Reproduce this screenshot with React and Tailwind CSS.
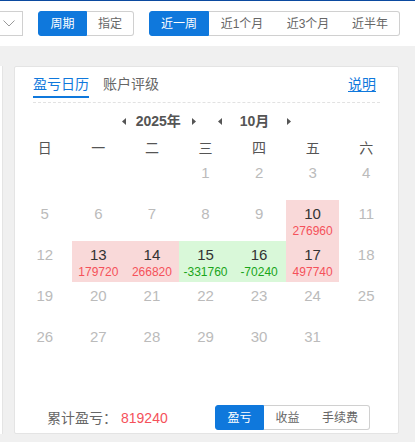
import React from "react";

const FONT = { fontFamily: '"Liberation Sans", Arial, "Noto Sans CJK SC", sans-serif' };

function TriL() {
  return (
    <svg width="4" height="7" viewBox="0 0 4 7" className="block">
      <path d="M4 0 L0 3.5 L4 7 Z" fill="#555" />
    </svg>
  );
}
function TriR() {
  return (
    <svg width="4" height="7" viewBox="0 0 4 7" className="block">
      <path d="M0 0 L4 3.5 L0 7 Z" fill="#555" />
    </svg>
  );
}

const days = [
  [null, null, null, { d: 1 }, { d: 2 }, { d: 3 }, { d: 4 }],
  [{ d: 5 }, { d: 6 }, { d: 7 }, { d: 8 }, { d: 9 }, { d: 10, v: "276960", up: true }, { d: 11 }],
  [
    { d: 12 },
    { d: 13, v: "179720", up: true },
    { d: 14, v: "266820", up: true },
    { d: 15, v: "-331760", up: false },
    { d: 16, v: "-70240", up: false },
    { d: 17, v: "497740", up: true },
    { d: 18 },
  ],
  [{ d: 19 }, { d: 20 }, { d: 21 }, { d: 22 }, { d: 23 }, { d: 24 }, { d: 25 }],
  [{ d: 26 }, { d: 27 }, { d: 28 }, { d: 29 }, { d: 30 }, { d: 31 }, null],
  [null, null, null, null, null, null, null],
];

function Cell({ c }) {
  if (!c) return <div className="h-[41px]" />;
  if (!c.v) {
    return (
      <div className="h-[41px] flex flex-col items-center pt-[5px]">
        <div className="text-[15px] leading-[18px] text-[#bbbbbb]">{c.d}</div>
      </div>
    );
  }
  return (
    <div
      className={
        "h-[41px] flex flex-col items-center pt-[5px] " +
        (c.up ? "bg-[#f9d9d9]" : "bg-[#d9f8d9]")
      }
    >
      <div className="text-[15px] leading-[18px] text-[#333333]">{c.d}</div>
      <div
        className={
          "text-[12px] leading-[16px] " + (c.up ? "text-[#f5515a]" : "text-[#1aa51a]")
        }
      >
        {c.v}
      </div>
    </div>
  );
}

export default function App() {
  return (
    <div className="w-[415px] h-[442px] bg-[#f0f0f0] overflow-hidden flex flex-col" style={FONT}>
      {/* Top bar */}
      <div className="h-[46px] bg-white border-t border-[#0b4aa0] flex items-start pt-[10px] shrink-0">
        <div className="w-[23px] h-[25px] border border-l-0 border-[#d0d0d0] flex items-center pl-[3px]">
          <svg width="12" height="7" viewBox="0 0 12 7">
            <path d="M0.5 0.5 L6 6 L11.5 0.5" fill="none" stroke="#999" strokeWidth="1" />
          </svg>
        </div>
        <div className="flex ml-[15px] text-[12px] leading-none">
          <div className="w-[49px] h-[25px] flex items-center justify-center bg-[#0f78dc] text-white border border-[#0f78dc] rounded-l-[3px]">
            周期
          </div>
          <div className="w-[47px] h-[25px] flex items-center justify-center text-[#666] border-y border-r border-[#d0d0d0] rounded-r-[3px]">
            指定
          </div>
        </div>
        <div className="flex ml-[15px] text-[12px] leading-none">
          <div className="w-[60px] h-[25px] flex items-center justify-center bg-[#0f78dc] text-white border border-[#0f78dc] rounded-l-[3px]">
            近一周
          </div>
          <div className="w-[66px] h-[25px] flex items-center justify-center text-[#666] border-y border-[#d0d0d0]">
            近1个月
          </div>
          <div className="w-[66px] h-[25px] flex items-center justify-center text-[#666] border-y border-[#d0d0d0]">
            近3个月
          </div>
          <div className="w-[59px] h-[25px] flex items-center justify-center text-[#666] border-y border-r border-[#d0d0d0] rounded-r-[3px]">
            近半年
          </div>
        </div>
      </div>

      {/* Content area */}
      <div className="flex items-start pt-[20px]">
        <div className="w-[3px] h-[368px] bg-white border-r border-[#e4e4e4]" />
        <div className="ml-[11px] w-[385px] h-[368px] bg-white border border-[#e4e4e4] rounded-[2px] flex flex-col">
          {/* tabs */}
          <div className="mx-[18px] pt-[7px] pb-[4px] border-b border-dashed border-[#e2e2e2] flex items-end text-[14px] leading-[20px]">
            <div className="pb-[2px] border-b-2 border-[#0f78dc] text-[#0f78dc]">盈亏日历</div>
            <div className="ml-[14px] pb-[4px] text-[#666]">账户评级</div>
            <div className="ml-auto mr-[4px] pb-[4px] text-[#0f78dc] underline underline-offset-2">说明</div>
          </div>

          {/* year/month nav */}
          <div className="mt-[6px] h-[24px] flex items-center justify-center text-[14px] font-bold text-[#555] leading-none">
            <TriL />
            <span className="ml-[10px]">2025年</span>
            <span className="ml-[11px]"><TriR /></span>
            <span className="ml-[22px]"><TriL /></span>
            <span className="ml-[18px]">10月</span>
            <span className="ml-[18px]"><TriR /></span>
          </div>

          {/* weekdays */}
          <div className="mt-[4px] ml-[3px] w-[375px] grid grid-cols-7 h-[22px] items-center text-[14px] text-[#555] leading-none">
            {["日", "一", "二", "三", "四", "五", "六"].map((w) => (
              <div key={w} className="text-center">{w}</div>
            ))}
          </div>

          {/* grid */}
          <div className="ml-[3px] w-[375px] grid grid-cols-7">
            {days.flat().map((c, i) => (
              <Cell key={i} c={c} />
            ))}
          </div>

          {/* footer */}
          <div className="flex items-center justify-between pl-[32px] pr-[28px] h-[25px]">
            <div className="flex items-center text-[14px] leading-none">
              <span className="text-[#666]">累计盈亏：</span>
              <span className="ml-[4px] text-[#f5515a]">819240</span>
            </div>
            <div className="flex text-[12px] leading-none">
              <div className="w-[49px] h-[25px] flex items-center justify-center bg-[#0f78dc] text-white border border-[#0f78dc] rounded-l-[3px]">
                盈亏
              </div>
              <div className="w-[47px] h-[25px] flex items-center justify-center text-[#666] border-y border-[#d0d0d0]">
                收益
              </div>
              <div className="w-[59px] h-[25px] flex items-center justify-center text-[#666] border-y border-r border-[#d0d0d0] rounded-r-[3px]">
                手续费
              </div>
            </div>
          </div>
        </div>
      </div>
    </div>
  );
}
